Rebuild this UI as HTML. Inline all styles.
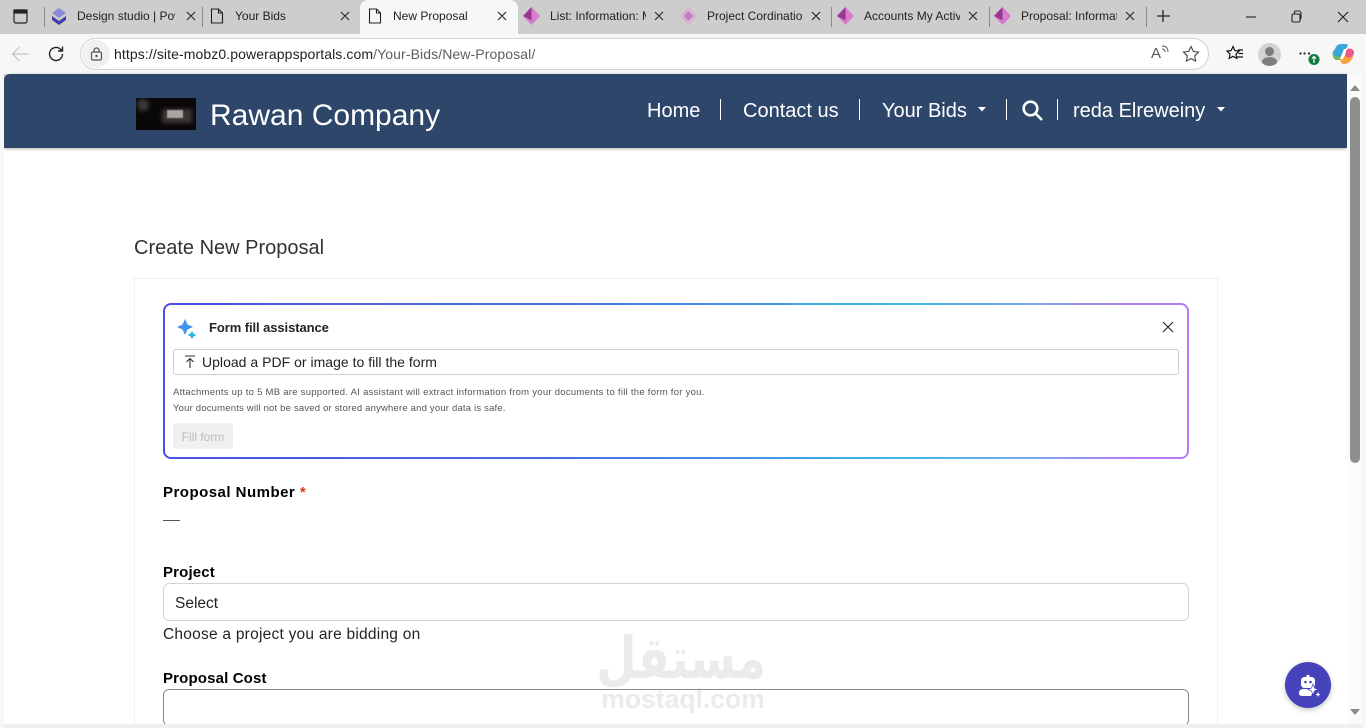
<!DOCTYPE html>
<html><head><meta charset="utf-8"><title>New Proposal</title>
<style>
html,body{margin:0;padding:0;width:1366px;height:728px;overflow:hidden;background:#cdcdcd;font-family:"Liberation Sans",sans-serif}
.a{position:absolute;white-space:nowrap}
.tab{position:absolute;top:0;height:34px;font-size:12px;color:#222;line-height:32px}
.sep{position:absolute;top:7px;width:1px;height:20px;background:#8a8a8a}
.nav{position:absolute;top:99px;color:#fff;font-size:20px;line-height:24px;white-space:nowrap}
.nsep{position:absolute;top:99px;width:1px;height:21px;background:#fff}
.lab{position:absolute;left:163px;font-size:15px;font-weight:bold;color:#000;white-space:nowrap;letter-spacing:.15px}
svg{position:absolute;overflow:visible}
</style></head><body>

<!-- tab strip -->
<div class="a" style="left:0;top:0;width:1366px;height:34px;background:#cdcdcd"></div>
<svg style="left:13px;top:9px" width="15" height="15" fill="none" stroke="#222" stroke-width="1.2"><rect x="1" y="1" width="13" height="13" rx="2"/><rect x="1" y="1" width="13" height="3" fill="#222"/></svg>
<div class="sep" style="left:44px"></div><div class="sep" style="left:202px"></div>
<div class="sep" style="left:831px"></div><div class="sep" style="left:989px"></div><div class="sep" style="left:1146px"></div>

<!-- active tab -->
<div class="a" style="left:360px;top:0;width:158px;height:34px;background:#f7f7f7;border-radius:8px 8px 0 0"></div>

<svg style="left:51px;top:8px" width="17" height="17"><path d="M8 0l7 5-7 5-7-5z" fill="#8a8ad8"/><path d="M1 8l7 5 7-5v4l-7 5-7-5z" fill="#3f3fa8"/></svg>
<div class="tab" style="left:77px;width:98px;overflow:hidden;white-space:nowrap">Design studio | Power</div>

<svg style="left:210px;top:8px" width="14" height="16" fill="none" stroke="#222" stroke-width="1.1"><path d="M1.5 1h7l4 4v10h-11zM8.5 1v4h4"/></svg>
<div class="tab" style="left:235px;white-space:nowrap">Your Bids</div>

<svg style="left:368px;top:8px" width="14" height="16" fill="none" stroke="#222" stroke-width="1.1"><path d="M1.5 1h7l4 4v10h-11zM8.5 1v4h4"/></svg>
<div class="tab" style="left:393px;white-space:nowrap">New Proposal</div>

<svg style="left:523px;top:7px" width="17" height="18"><path d="M8.500 0L17 9l-8.500 9L0 9z" fill="#d77ccc"/><path d="M8.500 0L0 9l8.500 4.500z" fill="#9a3590"/></svg>
<div class="tab" style="left:550px;width:96px;overflow:hidden;white-space:nowrap">List: Information: Main</div>

<svg style="left:680px;top:7px" width="17" height="18"><path d="M8.500 0L17 9l-8.500 9L0 9z" fill="#dcb0d6"/><path d="M8.500 4l4.500 5-4.500 5L4 9z" fill="#bd7fb4"/></svg>
<div class="tab" style="left:707px;width:96px;overflow:hidden;white-space:nowrap">Project Cordination</div>

<svg style="left:837px;top:7px" width="17" height="18"><path d="M8.500 0L17 9l-8.500 9L0 9z" fill="#d77ccc"/><path d="M8.500 0L0 9l8.500 4.500z" fill="#9a3590"/></svg>
<div class="tab" style="left:864px;width:96px;overflow:hidden;white-space:nowrap">Accounts My Activity</div>

<svg style="left:994px;top:7px" width="17" height="18"><path d="M8.500 0L17 9l-8.500 9L0 9z" fill="#d77ccc"/><path d="M8.500 0L0 9l8.500 4.500z" fill="#9a3590"/></svg>
<div class="tab" style="left:1021px;width:96px;overflow:hidden;white-space:nowrap">Proposal: Information</div>

<svg style="left:0;top:0" width="1366" height="34" fill="none" stroke="#222" stroke-width="1.1">
<path d="M187 12l8 8M195 12l-8 8M341 12l8 8M349 12l-8 8M498 12l8 8M506 12l-8 8M655 12l8 8M663 12l-8 8M812 12l8 8M820 12l-8 8M969 12l8 8M977 12l-8 8M1126 12l8 8M1134 12l-8 8"/>
<path d="M1163 10v12M1157 16h13" stroke-width="1.3"/>
<path d="M1246 17h10"/>
<rect x="1292" y="14" width="8" height="8" rx="1.5"/><path d="M1294.500 14v-1.500a1.500 1.500 0 0 1 1.500-1.500h3a2 2 0 0 1 2 2v4.500a1.500 1.500 0 0 1-1 1.500"/>
<path d="M1338 12l10 10M1348 12l-10 10"/>
</svg>

<!-- toolbar -->
<div class="a" style="left:0;top:34px;width:1366px;height:40px;background:#f7f7f7"></div>
<svg style="left:11px;top:45px" width="18" height="18" fill="none" stroke="#c4c4c4" stroke-width="1.200"><path d="M1.500 9h16M8.500 2l-7 7 7 7"/></svg>
<svg style="left:47px;top:45px" width="18" height="18" fill="none" stroke="#222" stroke-width="1.400"><path d="M15.500 9a6.500 6.500 0 1 1-2-4.700L15.500 6M15.500 1.500V6H11"/></svg>
<div class="a" style="left:80px;top:38px;width:1127px;height:30px;background:#fff;border:1px solid #d2d2d2;border-radius:16px"></div>
<div class="a" style="left:82px;top:40px;width:28px;height:28px;background:#f0f0f0;border-radius:14px"></div>
<svg style="left:90px;top:47px" width="13" height="14" fill="none" stroke="#555" stroke-width="1.200"><rect x="1.500" y="5" width="10" height="8" rx="1.500"/><path d="M4 5V3.500a2.500 2.500 0 0 1 5 0V5"/><circle cx="6.500" cy="9" r=".6" fill="#555"/></svg>
<div class="a" style="left:114px;top:46px;font-size:14px;line-height:17px;color:#1f1f1f;letter-spacing:.1px">https://site-mobz0.powerappsportals.com<span style="color:#5f5f5f">/Your-Bids/New-Proposal/</span></div>
<div class="a" style="left:1151px;top:46px;font-size:15px;line-height:16px;color:#555">A</div>
<svg style="left:1161px;top:45px" width="8" height="9" fill="none" stroke="#555" stroke-width=".9"><path d="M1 4c2 0 3 1 3 3M1 1c4 0 6 2 6 6"/></svg>
<svg style="left:1182px;top:45px" width="18" height="18" fill="none" stroke="#444" stroke-width="1.100"><path d="M9 1.500l2.300 4.900 5.200.7-3.800 3.700.9 5.300L9 13.500l-4.600 2.600.9-5.300L1.500 7.100l5.200-.7z"/></svg>
<svg style="left:1225px;top:45px" width="20" height="18" fill="none" stroke="#111" stroke-width="1.200"><path d="M8 1.500l1.900 4.100 4.100.5-3 3 .8 4.300L8 11.300l-3.800 2.100.8-4.300-3-3 4.100-.5z"/><path d="M13 5h5M13.500 8.500h4.500M12 12h6"/></svg>
<div class="a" style="left:1258px;top:43px;width:23px;height:23px;border-radius:50%;background:#d2d2d2;overflow:hidden">
<div class="a" style="left:7px;top:4px;width:9px;height:9px;border-radius:50%;background:#7d7d7d"></div>
<div class="a" style="left:4px;top:14px;width:15px;height:9px;border-radius:50%;background:#7d7d7d"></div></div>
<svg style="left:1299px;top:50px" width="16" height="16"><circle cx="1.500" cy="3.500" r="1.100" fill="#222"/><circle cx="5.500" cy="3.500" r="1.100" fill="#222"/><circle cx="10" cy="3.500" r="1.100" fill="#222"/><circle cx="15" cy="9.500" r="5.500" fill="#107c41"/><path d="M15 13V6.500M13 8.500l2-2 2 2" stroke="#fff" stroke-width="1.200" fill="none"/></svg>
<svg style="left:1332px;top:43px" width="23" height="22">
<path d="M3 6c1-3 3-5 6-5h5c2 0 2 2 1 3l-5 9c-1 2-4 2-5 1L1 12c-1-2 0-4 2-6z" fill="#3aa6dc"/>
<path d="M1 9c1 3 2 5 5 5l3-1-1 4H4C1 16 0 12 1 9z" fill="#71b94b"/>
<path d="M8 14l8-2 5 1c-1 5-5 8-9 8-3 0-4-3-4-7z" fill="#f7a13c"/>
<path d="M14 7c2-2 5-2 7 0 2 2 1 6-2 7-2 1-4 1-6-1z" fill="#ea5b8c"/>
<path d="M12 6l3 0-4 10-3 0z" fill="#fff"/></svg>

<!-- page -->
<div class="a" style="left:4px;top:74px;width:1343px;height:650px;background:#fff;overflow:hidden;border-radius:6px 0 0 0"></div>
<div class="a" style="left:4px;top:74px;width:1343px;height:74px;background:#2d4669;border-radius:6px 0 0 0;box-shadow:0 1px 3px rgba(0,0,0,.3)"></div>

<!-- logo -->
<div class="a" style="left:136px;top:98px;width:60px;height:32px;background:#0a0709;overflow:hidden">
<div class="a" style="left:26px;top:11px;width:30px;height:14px;background:#3a3836;filter:blur(2px)"></div>
<div class="a" style="left:31px;top:12px;width:16px;height:8px;background:#a8a4a1;filter:blur(.6px)"></div>
<div class="a" style="left:1px;top:1px;width:12px;height:12px;background:#3a3a3a;border-radius:50%;filter:blur(2px)"></div>
</div>
<div class="a" style="left:210px;top:98px;font-size:30px;line-height:36px;color:#fff">Rawan Company</div>

<div class="nav" style="left:647px">Home</div><div class="nsep" style="left:720px"></div>
<div class="nav" style="left:743px">Contact us</div><div class="nsep" style="left:859px"></div>
<div class="nav" style="left:882px">Your Bids</div>
<svg style="left:977px;top:107px" width="10" height="5"><path d="M1 0h8l-4 4.500z" fill="#fff"/></svg>
<div class="nsep" style="left:1006px"></div>
<svg style="left:1022px;top:100px" width="22" height="21" fill="none" stroke="#fff" stroke-width="2.600"><circle cx="8.500" cy="8.500" r="6.800"/><path d="M13.500 13.500l6.500 6.500"/></svg>
<div class="nsep" style="left:1057px"></div>
<div class="nav" style="left:1073px">reda Elreweiny</div>
<svg style="left:1216px;top:107px" width="10" height="5"><path d="M1 0h8l-4 4.500z" fill="#fff"/></svg>

<!-- heading -->
<div class="a" style="left:134px;top:236px;font-size:20px;line-height:24px;color:#333">Create New Proposal</div>

<!-- card -->
<div class="a" style="left:134px;top:278px;width:1082px;height:446px;border:1px solid #f0f0f0;border-bottom:0"></div>

<!-- assistant box -->
<div class="a" style="left:163px;top:303px;width:1026px;height:156px;box-sizing:border-box;border:2px solid transparent;border-radius:8px;background:linear-gradient(#fff,#fff) padding-box,linear-gradient(90deg,#4a4fe0 0%,#4a70e0 40%,#3fb7e8 72%,#7aa6f0 85%,#b97af5 95%,#b97af5 100%) border-box"></div>
<svg style="left:177px;top:318px" width="21" height="21"><path d="M8 1l2.500 5.500L16 9l-5.500 2.500L8 17l-2.500-5.500L0 9l5.500-2.500z" fill="#3d96ec"/><path d="M15 13l1.500 2.500L19.500 17l-3 1.500L15 21l-1.500-2.500-3-1.500 3-1.500z" fill="#2fb4ea"/></svg>
<div class="a" style="left:209px;top:320px;font-size:13px;line-height:16px;font-weight:bold;color:#242424;letter-spacing:-.08px">Form fill assistance</div>
<svg style="left:1162px;top:321px" width="12" height="12" fill="none" stroke="#222" stroke-width="1.100"><path d="M1 1l10 10M11 1L1 11"/></svg>
<div class="a" style="left:173px;top:349px;width:1004px;height:24px;border:1px solid #cfcfcf;border-radius:3px"></div>
<svg style="left:184px;top:355px" width="12" height="14" fill="none" stroke="#333" stroke-width="1.100"><path d="M1 1h10M6 13V3.500M2.500 7L6 3.500 9.500 7"/></svg>
<div class="a" style="left:202px;top:354px;font-size:14px;line-height:17px;color:#1f1f1f;letter-spacing:.02px">Upload a PDF or image to fill the form</div>
<div class="a" style="left:173px;top:387px;font-size:9.500px;line-height:12px;color:#555;letter-spacing:.27px">Attachments up to 5 MB are supported. AI assistant will extract information from your documents to fill the form for you.</div>
<div class="a" style="left:173px;top:403px;font-size:9.500px;line-height:12px;color:#555;letter-spacing:.19px">Your documents will not be saved or stored anywhere and your data is safe.</div>
<div class="a" style="left:173px;top:423px;width:60px;height:26px;background:#f0f0f0;border-radius:3px;color:#bdbdbd;font-size:12px;line-height:28px;text-align:center">Fill form</div>

<!-- form -->
<div class="lab" style="top:484px;line-height:18px;letter-spacing:.48px">Proposal Number <span style="color:#c8401a">*</span></div>
<div class="a" style="left:163px;top:520px;width:17px;height:1px;background:#555"></div>
<div class="lab" style="top:564px;line-height:18px">Project</div>
<div class="a" style="left:163px;top:583px;width:1024px;height:36px;border:1px solid #ced4da;border-radius:6px;background:#fff"></div>
<div class="a" style="left:175px;top:594px;font-size:15.500px;line-height:19px;color:#212529">Select</div>
<div class="a" style="left:163px;top:625px;font-size:15.500px;line-height:19px;color:#212529;letter-spacing:.24px">Choose a project you are bidding on</div>
<div class="lab" style="top:670px;line-height:18px">Proposal Cost</div>

<!-- watermark -->
<div class="a" style="left:560px;top:624px;width:206px;height:68px;font-family:'DejaVu Sans',sans-serif;font-weight:bold;font-size:58px;line-height:68px;text-align:center;color:#ebebeb;transform:scaleX(.8);transform-origin:100% 50%" dir="rtl">مستقل</div>
<div class="a" style="left:600px;top:684px;width:166px;font-weight:bold;font-size:26.500px;line-height:30px;text-align:center;color:#ebebeb">mostaql.com</div>

<div class="a" style="left:163px;top:689px;width:1026px;height:37px;box-sizing:border-box;border:1px solid #8a8a8a;border-radius:6px"></div>

<!-- scrollbar -->
<div class="a" style="left:1347px;top:74px;width:15px;height:650px;background:#fbfbfb"></div>
<svg style="left:1350px;top:85px" width="10" height="6"><path d="M0 6l5-6 5 6z" fill="#8a8a8a"/></svg>
<div class="a" style="left:1350px;top:97px;width:10px;height:366px;background:#8f8f8f;border-radius:5px"></div>
<svg style="left:1350px;top:709px" width="10" height="6"><path d="M0 0l5 6 5-6z" fill="#8a8a8a"/></svg>

<!-- browser bottom/right edge -->
<div class="a" style="left:0;top:724px;width:1366px;height:4px;background:#efefef"></div>
<div class="a" style="left:0;top:74px;width:4px;height:654px;background:#f7f7f7"></div>
<div class="a" style="left:1362px;top:74px;width:4px;height:654px;background:#f7f7f7"></div>

<!-- chatbot button -->
<div class="a" style="left:1285px;top:662px;width:46px;height:46px;border-radius:50%;background:#4643ba;box-shadow:0 2px 6px rgba(0,0,0,.22)"></div>
<svg style="left:1298px;top:675px" width="24" height="22"><rect x="3" y="2" width="14" height="11" rx="3.500" fill="#fff"/><rect x="8.500" y="0" width="3" height="3" fill="#fff"/><circle cx="7.500" cy="7" r="1.300" fill="#4643ba"/><circle cx="12.500" cy="7" r="1.300" fill="#4643ba"/><path d="M1 18c0-3 2-4 5-4h5l4 3-2 4H5c-3 0-4-1-4-3z" fill="#fff"/><path d="M15 9l1.500 4L20 14.500 16.500 16 15 20l-1.500-4L10 14.500l3.500-1.500z" fill="#fff" stroke="#4643ba" stroke-width=".7"/><path d="M20 17l.8 1.700 1.700.8-1.700.8L20 22l-.8-1.700-1.700-.8 1.700-.8z" fill="#fff"/></svg>
</body></html>
